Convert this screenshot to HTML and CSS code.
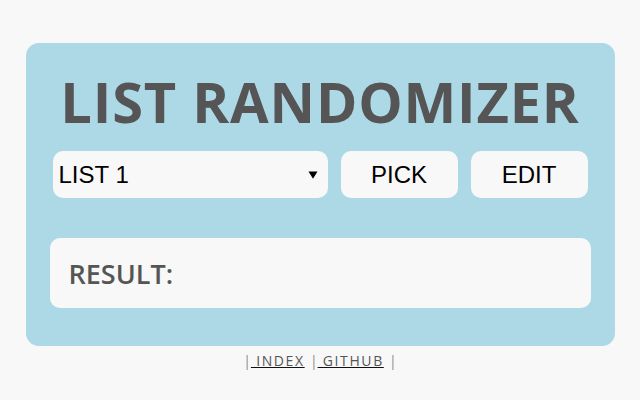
FILE: index.html
```html
<!DOCTYPE html>
<html>
<head>
<meta charset="utf-8">
<title>List Randomizer</title>
<link rel="stylesheet" href="styles.css">
</head>
<body>
<main class="card">
  <h1 class="title">LIST RANDOMIZER</h1>
  <div class="controls">
    <div class="select-box">
      <select class="list-select">
        <option>LIST 1</option>
        <option>LIST 2</option>
      </select>
      <svg class="arrow" width="10" height="8" viewBox="0 0 10 8"><path d="M0.5 0.5 H9.5 L5 7.8 Z" fill="#000"/></svg>
    </div>
    <button class="btn">PICK</button>
    <button class="btn">EDIT</button>
  </div>
  <div class="result">RESULT:</div>
</main>
<footer class="footer">
  <span class="sep">|</span><a href="#" class="link">&nbsp;INDEX</a>&nbsp;<span class="sep">|</span><a href="#" class="link">&nbsp;GITHUB</a>&nbsp;<span class="sep">|</span>
</footer>
</body>
</html>
```
FILE: styles.css
```css
html, body {
  margin: 0;
  padding: 0;
  background: #f8f8f8;
}
body {
  font-family: "Open Sans", "DejaVu Sans", sans-serif;
}
.card {
  width: 589px;
  margin: 43px auto 0;
  box-sizing: border-box;
  background: #add8e6;
  border-radius: 13px;
  padding: 20px 24px 38px;
}
.title {
  margin: 0;
  text-align: center;
  font-size: 56px;
  font-weight: 700;
  line-height: 76px;
  letter-spacing: 0.8px;
  color: #555555;
}
.controls {
  display: flex;
  gap: 13px;
  margin: 12px 3px 0;
  height: 47px;
}
.select-box {
  width: 275px;
  display: flex;
  align-items: center;
  background: #f8f8f8;
  border-radius: 10px;
  padding: 0 10px 0 6px;
  box-sizing: border-box;
}
.list-select {
  flex: 1;
  appearance: none;
  -webkit-appearance: none;
  border: none;
  background: transparent;
  font-family: "Liberation Sans", Arial, sans-serif;
  font-size: 24px;
  color: #000;
  padding: 0;
  outline: none;
  height: 100%;
}
.arrow {
  display: block;
  margin-top: 1px;
}
.btn {
  width: 117px;
  border: none;
  border-radius: 10px;
  background: #f8f8f8;
  font-family: "Liberation Sans", Arial, sans-serif;
  font-size: 24px;
  color: #000;
  padding: 0;
}
.result {
  margin-top: 40px;
  height: 70px;
  box-sizing: border-box;
  background: #f8f8f8;
  border-radius: 10px;
  padding: 0 19px;
  display: flex;
  align-items: center;
  font-size: 27px;
  font-weight: 600;
  color: #555555;
}
.footer {
  margin-top: 5px;
  text-align: center;
  font-size: 14px;
  letter-spacing: 1.6px;
  color: #555555;
}
.sep {
  color: #8a8a8a;
  letter-spacing: 0;
}
.link {
  color: #555555;
  text-decoration: underline;
  text-decoration-color: #111;
}
```
